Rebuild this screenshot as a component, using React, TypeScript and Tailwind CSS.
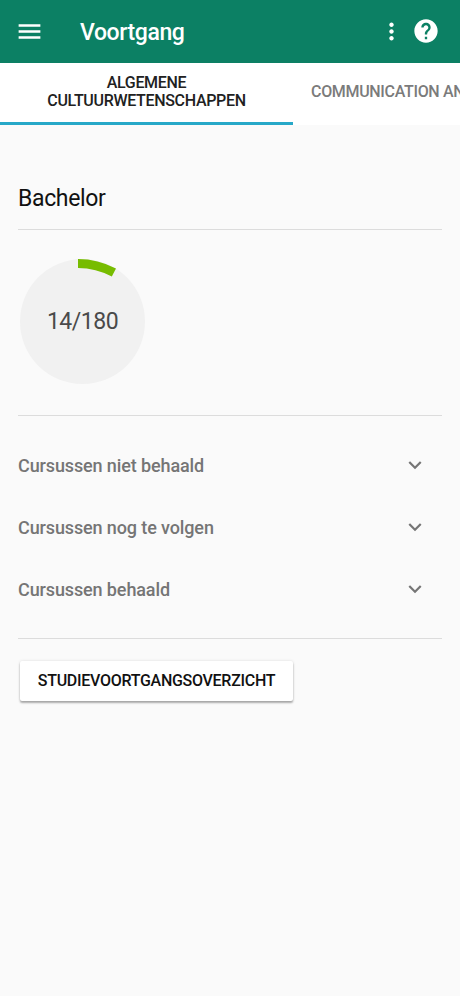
import { MdExpandMore, MdHelp, MdMenu, MdMoreVert } from "react-icons/md";

const SECTIONS = [
  "Cursussen niet behaald",
  "Cursussen nog te volgen",
  "Cursussen behaald",
];

function Header() {
  return (
    <header className="flex h-[62.5px] items-center bg-[#0c8064] pl-[15px] pr-5 text-white">
      <button type="button" aria-label="Menu">
        <MdMenu className="size-[29px]" />
      </button>
      <h1 className="ml-9 flex-1 pt-[3px] text-[23px] font-medium leading-7 tracking-[-0.4px]">
        Voortgang
      </h1>
      <button type="button" aria-label="Meer">
        <MdMoreVert className="size-[27px]" />
      </button>
      <button type="button" aria-label="Help" className="ml-[7px]">
        <MdHelp className="size-7" />
      </button>
    </header>
  );
}

function Tabs() {
  return (
    <nav className="flex h-[62px] overflow-hidden bg-white text-[16px] font-medium leading-[18px] tracking-[-0.32px]">
      <button
        type="button"
        className="flex w-[293px] shrink-0 items-center justify-center border-b-[3px] border-[#27a8c8] text-[#212121]"
      >
        <span>
          ALGEMENE
          <br />
          CULTUURWETENSCHAPPEN
        </span>
      </button>
      <button
        type="button"
        className="shrink-0 whitespace-nowrap pb-[3px] pl-[18px] text-[#7b7b7b]"
      >
        COMMUNICATION AN
      </button>
    </nav>
  );
}

function Credits() {
  return (
    <div className="ml-[2px] grid size-[125px] place-items-center rounded-full bg-[#f1f1f1]">
      <svg
        viewBox="0 0 125 125"
        className="col-start-1 row-start-1 size-[125px]"
        aria-hidden="true"
      >
        <path
          d="M58 0A80.5 80.5 0 0 1 96 9.6L91.8 17.6A71.5 71.5 0 0 0 58 9Z"
          fill="#77bc00"
        />
      </svg>
      <span className="col-start-1 row-start-1 text-[23px] leading-7 tracking-[-0.5px] text-[#4a4a4a]">
        14/180
      </span>
    </div>
  );
}

export default function App() {
  return (
    <div className="min-h-[996px] w-[460px] overflow-hidden bg-[#fafafa] font-['Roboto',sans-serif]">
      <Header />
      <Tabs />
      <main className="px-[18px] pt-[59.5px]">
        <h2 className="text-[23px] leading-[30px] tracking-[-0.35px] text-[#111]">
          Bachelor
        </h2>
        <div className="mt-[15px] border-y border-[#dcdcdc] pb-[31px] pt-[29px]">
          <Credits />
        </div>
        <ul className="border-b border-[#dcdcdc] pb-[17px] pt-[18px]">
          {SECTIONS.map((title) => (
            <li
              key={title}
              className="flex h-[62.2px] items-center justify-between pr-[13.6px] text-[#757575]"
            >
              <span className="pt-px text-[18px] font-medium leading-6 tracking-[-0.12px]">
                {title}
              </span>
              <MdExpandMore className="size-[26px]" />
            </li>
          ))}
        </ul>
        <button
          type="button"
          className="ml-[2px] mt-[22px] h-10 w-[273px] rounded-[2px] bg-white text-[16px] font-medium tracking-[-0.28px] text-[#111] shadow-[0_2px_2px_rgba(0,0,0,0.3),0_0_3px_rgba(0,0,0,0.12)]"
        >
          STUDIEVOORTGANGSOVERZICHT
        </button>
      </main>
    </div>
  );
}
